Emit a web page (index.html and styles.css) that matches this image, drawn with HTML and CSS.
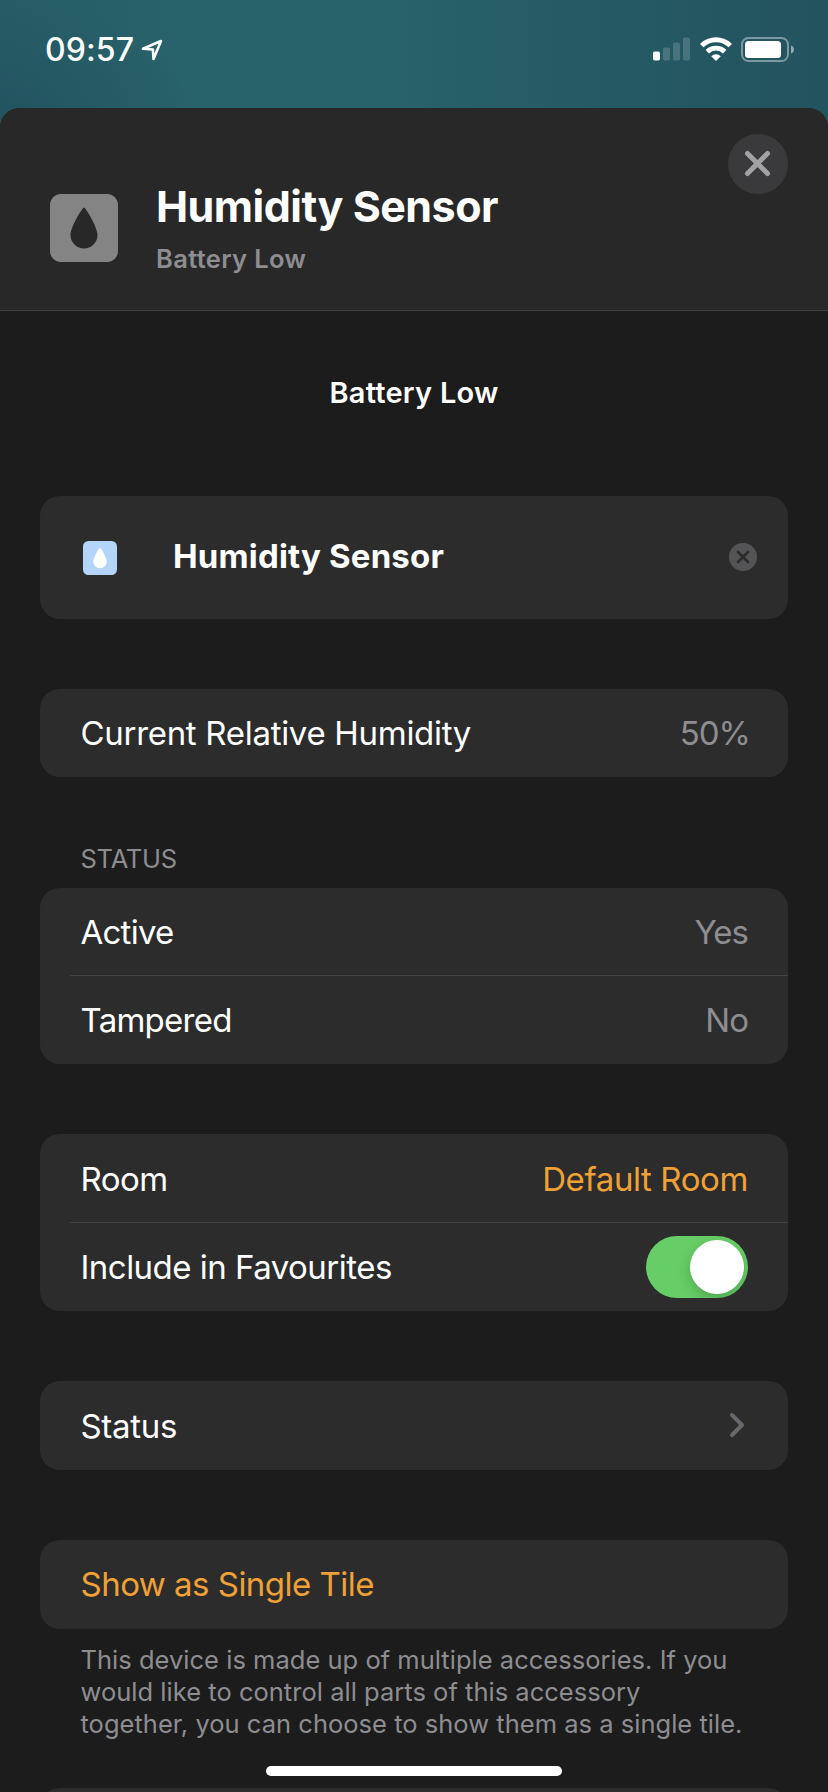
FILE: index.html
```html
<!DOCTYPE html>
<html lang="en-GB">
<head>
<meta charset="utf-8">
<title>Humidity Sensor</title>
<link rel="stylesheet" href="styles.css">
</head>
<body>
<div class="screen">
  <div class="status-bar">
    <div class="clock">
      <span class="time">09:57</span>
      <svg class="location" width="22" height="22" viewBox="0 0 22 22"><path d="M2 9.8 20 2 12.500 20 11.900 10.500Z" fill="none" stroke="#fff" stroke-width="2.6" stroke-linejoin="round"/></svg>
    </div>
    <div class="indicators">
      <svg class="signal" width="38" height="24" viewBox="0 0 38 24"><rect x="0" y="14.5" width="7" height="9" rx="1.8" fill="#fff"/><g fill="#fff" opacity=".17"><rect x="10" y="10.5" width="7" height="13" rx="1.8"/><rect x="20" y="5.5" width="7" height="18" rx="1.8"/><rect x="30" y=".5" width="7" height="23" rx="1.8"/></g></svg>
      <svg class="wifi" width="32" height="24" viewBox="0 0 32 24"><g fill="none" stroke="#fff" stroke-width="4.8"><path d="M1.7 8.6a20.4 20.4 0 0 1 28.6 0"/><path d="M7.3 14.7a12.5 12.5 0 0 1 17.4 0"/></g><path d="M16 24 11.2 19.3a6.8 6.8 0 0 1 9.6 0Z" fill="#fff"/></svg>
      <svg class="battery" width="53" height="25" viewBox="0 0 53 25"><rect x="1" y="1" width="46" height="23" rx="6.5" fill="none" stroke="#fff" stroke-opacity=".4" stroke-width="2"/><rect x="4" y="4" width="36" height="17" rx="3.5" fill="#fff"/><path d="M50 8.5a4.2 4.2 0 0 1 0 8Z" fill="#fff" opacity=".5"/></svg>
    </div>
  </div>
  <main class="sheet">
    <header class="header">
      <svg class="tile-icon" width="68" height="68" viewBox="0 0 68 68"><rect width="68" height="68" rx="11" fill="#848484"/><path d="M34 13.5C32.500 13.500 20.500 33 20.500 41A13.500 13.500 0 0 0 47.500 41C47.500 33 35.500 13.500 34 13.500Z" fill="#282828"/></svg>
      <div class="heading">
        <h1 class="title">Humidity Sensor</h1>
        <p class="subtitle">Battery Low</p>
      </div>
      <button class="close" aria-label="Close"><svg width="60" height="60" viewBox="0 0 60 60"><path d="M19.500 19.500 39.500 39.500M39.500 19.500 19.500 39.500" stroke="#a1a1a6" stroke-width="5" stroke-linecap="round"/></svg></button>
    </header>
    <p class="notice">Battery Low</p>
    <section class="card name-card">
      <svg class="name-icon" width="34" height="34" viewBox="0 0 68 68"><rect width="68" height="68" rx="11" fill="#b3d5fa"/><path d="M34 13.5C32.500 13.500 20.500 33 20.500 41A13.500 13.500 0 0 0 47.500 41C47.500 33 35.500 13.500 34 13.500Z" fill="#fff"/></svg>
      <span class="name">Humidity Sensor</span>
      <svg class="clear" width="28" height="28" viewBox="0 0 28 28"><circle cx="14" cy="14" r="14" fill="#545456"/><path d="M9 9 19 19M19 9 9 19" stroke="#2c2c2c" stroke-width="2.700" stroke-linecap="round"/></svg>
    </section>
    <section class="card humidity">
      <div class="row"><span class="label wide">Current Relative Humidity</span><span class="value percent">50%</span></div>
    </section>
    <h2 class="section-label">STATUS</h2>
    <section class="card readings">
      <div class="row divided"><span class="label tight">Active</span><span class="value short">Yes</span></div>
      <div class="row"><span class="label tight">Tampered</span><span class="value short">No</span></div>
    </section>
    <section class="card room">
      <div class="row divided"><span class="label">Room</span><span class="value accent">Default Room</span></div>
      <div class="row"><span class="label">Include in Favourites</span><span class="switch"><span class="knob"></span></span></div>
    </section>
    <section class="card tall">
      <div class="row"><span class="label wide">Status</span><svg class="chevron" width="16" height="26" viewBox="0 0 16 26"><path d="M3 3 13 13 3 23" fill="none" stroke="#68686d" stroke-width="4" stroke-linecap="round" stroke-linejoin="round"/></svg></div>
    </section>
    <section class="card tall action">
      <div class="row"><span class="label accent">Show as Single Tile</span></div>
    </section>
    <p class="footnote">This device is made up of multiple accessories. If you<br>would like to control all parts of this accessory<br>together, you can choose to show them as a single tile.</p>
    <section class="card next"></section>
  </main>
  <div class="home-indicator"></div>
</div>
</body>
</html>
```
FILE: styles.css
```css
* { box-sizing: border-box; }
body { margin: 0; background: #1c1c1c; font-family: Inter, "Liberation Sans", sans-serif; color: #fff; }
h1, h2, p { margin: 0; font-weight: inherit; }
.screen {
  position: relative; width: 828px; height: 1792px; overflow: hidden;
  background:
    radial-gradient(ellipse 200px 130px at 0 128px, rgba(32, 77, 91, .6), transparent),
    linear-gradient(90deg, #265d67 0, #28626a 190px, #28626a 390px, #255a64 600px, #23535f 828px);
}
.status-bar { display: flex; justify-content: space-between; height: 108px; padding: 37px 34px 0 45px; }
.clock { display: flex; align-items: flex-start; }
.time { font-size: 32px; line-height: 26px; font-weight: 500; width: 96px; letter-spacing: .1px; white-space: nowrap; }
.location { margin-top: 2px; }
.indicators { display: flex; align-items: flex-start; }
.wifi { margin-left: 9px; }
.battery { margin-left: 9px; }
.sheet { height: 1684px; background: #1c1c1c; border-radius: 20px 20px 0 0; overflow: hidden; }
.header { display: flex; height: 203px; background: #282828; border-bottom: 1px solid #3e3e40; padding: 26px 40px 0 50px; }
.tile-icon { margin-top: 60px; }
.heading { margin-left: 38px; flex: 1; padding-top: 45px; }
.title { font-size: 43px; line-height: 54px; font-weight: 700; letter-spacing: -.52px; white-space: nowrap; }
.subtitle { font-size: 25.5px; line-height: 32px; font-weight: 600; letter-spacing: .35px; color: #8d8d92; margin-top: 10px; }
.close { width: 60px; height: 60px; border: 0; border-radius: 50%; padding: 0; background: #3a3a3c; }
.close svg { display: block; }
.notice { margin-top: 64px; height: 121px; font-size: 29px; line-height: 36px; font-weight: 600; letter-spacing: .25px; text-align: center; }
.card { margin: 0 40px; background: #2c2c2c; border-radius: 20px; }
.name-card { display: flex; align-items: center; height: 123px; padding: 0 31px 0 43px; }
.name { flex: 1; margin-left: 56px; padding-bottom: 4px; font-size: 33px; font-weight: 700; letter-spacing: .17px; }
.clear { margin-bottom: 1px; }
.humidity { margin-top: 70px; }
.row { display: flex; align-items: center; justify-content: space-between; height: 88px; padding: 0 40px 0 40.5px; font-size: 33px; }
.divided { background: linear-gradient(#434345, #434345) 30px 100% / 100% 1px no-repeat; }
.label { letter-spacing: -.52px; }
.wide { letter-spacing: -.3px; }
.tight { letter-spacing: -.75px; }
.value { color: #8d8d92; letter-spacing: -.4px; }
.percent { letter-spacing: -1px; margin-right: -2px; }
.short { letter-spacing: -1px; margin-right: 0; }
.accent { color: #f0a136; }
.section-label { margin: 66px 80.5px 0; height: 45px; font-size: 25.5px; line-height: 32px; letter-spacing: -.25px; color: #8d8d92; }
.room { margin-top: 70px; }
.room .divided { height: 89px; }
.switch { width: 102px; height: 62px; padding: 4px; border-radius: 31px; background: #67ce67; display: flex; justify-content: flex-end; overflow: hidden; }
.knob { width: 54px; height: 54px; border-radius: 50%; background: #fff; box-shadow: 0 5px 14px rgba(0, 0, 0, .2); }
.chevron { margin-right: 3px; margin-bottom: 1px; }
.tall { margin-top: 70px; }
.tall .row { height: 89px; }
.action .label { padding-bottom: 2px; }
.footnote { margin: 15px 0 0 80.5px; height: 144px; font-size: 25.5px; line-height: 32px; letter-spacing: .02px; color: #8d8d92; white-space: nowrap; }
.next { height: 90px; }
.home-indicator { position: absolute; left: 266px; top: 1766px; width: 296px; height: 10px; border-radius: 5px; background: #fff; }
```
